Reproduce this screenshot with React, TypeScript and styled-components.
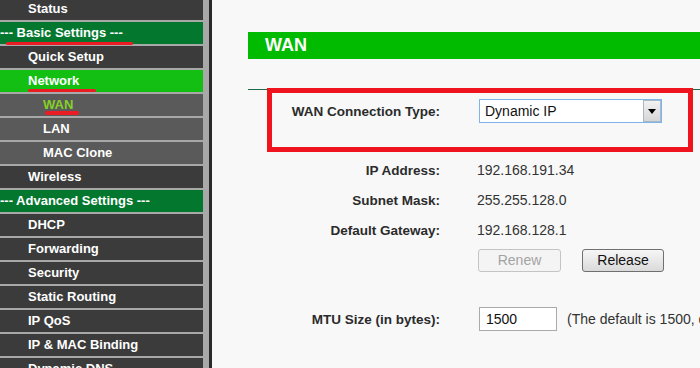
import React from "react";
import styled, { createGlobalStyle } from "styled-components";

const Global = createGlobalStyle`
  html, body { margin: 0; padding: 0; background: #f8f8f8; overflow: hidden; }
  body { font-family: "Liberation Sans", Arial, sans-serif; }
  #root { width: 700px; height: 368px; }
`;

const Page = styled.div`
  display: flex;
  width: 700px;
  height: 368px;
  overflow: hidden;
`;

const Sidebar = styled.nav`
  flex: 0 0 auto;
  width: 203px;
  height: 368px;
  padding-right: 6px;
  background: #a8a8a8;
  border-right: 3px solid #2a2a2a;
  overflow: hidden;
`;

const MenuList = styled.div`
  margin-top: -2px;
  display: flex;
  flex-direction: column;
  gap: 2px;
`;

type Kind = "top" | "sub" | "current" | "category" | "active";

const rowBg: Record<Kind, string> = {
  top: "#3b3b3b",
  sub: "#5a5a5a",
  current: "#5a5a5a",
  category: "#04772f",
  active: "#12bf12",
};

const MenuItem = styled.div<{ $kind: Kind }>`
  flex: 0 0 22px;
  height: 22px;
  line-height: 22px;
  font-size: 13px;
  font-weight: bold;
  white-space: nowrap;
  color: ${(p) => (p.$kind === "current" ? "#84d026" : "#ffffff")};
  background: ${(p) => rowBg[p.$kind]};
  padding-left: ${(p) =>
    p.$kind === "category" ? 0 : p.$kind === "sub" || p.$kind === "current" ? 43 : 28}px;
`;

const Mark = styled.span<{ $l: number; $r: number; $b: number; $h: number }>`
  position: relative;
  display: inline-block;
  &::after {
    content: "";
    position: absolute;
    left: ${(p) => p.$l}px;
    right: ${(p) => p.$r}px;
    bottom: ${(p) => p.$b}px;
    height: ${(p) => p.$h}px;
    background: #ec1c24;
    border-radius: 2px;
  }
`;

const Main = styled.main`
  flex: 1;
  min-width: 0;
  background: #f8f8f8;
  padding: 32px 0 0 36px;
`;

const TitleBar = styled.h1`
  margin: 0;
  height: 27px;
  line-height: 27px;
  background: #00bb00;
  color: #ffffff;
  font-size: 18px;
  font-weight: bold;
  padding-left: 17px;
`;

const Rule = styled.div`
  margin-top: 30px;
  height: 1px;
  background: #1f6b48;
`;

const Highlight = styled.div`
  margin: -2px 7px 0 19px;
  border: 5px solid #f0141e;
  padding: 6px 0 24px;
`;

const Fields = styled.div<{ $top: number }>`
  margin-top: ${(p) => p.$top}px;
`;

const FormRow = styled.div<{ $labelWidth: number; $gap: number; $height: number }>`
  display: grid;
  grid-template-columns: ${(p) => p.$labelWidth}px 1fr;
  column-gap: ${(p) => p.$gap}px;
  align-items: center;
  height: ${(p) => p.$height}px;
`;

const Label = styled.div`
  text-align: right;
  font-size: 13.5px;
  font-weight: bold;
  color: #2b2b2b;
  white-space: nowrap;
`;

const Value = styled.div`
  font-size: 14px;
  color: #333333;
  white-space: nowrap;
  display: flex;
  align-items: center;
`;

const Select = styled.div`
  box-sizing: border-box;
  width: 183px;
  height: 24px;
  margin-left: 2px;
  border: 1px solid #7eb4ea;
  background: #ffffff;
  font-size: 14px;
  color: #111111;
  padding-left: 5px;
  display: flex;
  align-items: center;
  justify-content: space-between;
`;

const SelectButton = styled.span`
  box-sizing: border-box;
  width: 18px;
  height: 22px;
  border: 1px solid #a9b7c6;
  background: linear-gradient(#f2f2f2, #d6d6d6);
  display: flex;
  align-items: center;
  justify-content: center;
`;

const Button = styled.button<{ $disabled?: boolean }>`
  box-sizing: border-box;
  height: 23px;
  width: ${(p) => (p.$disabled ? 83 : 82)}px;
  padding: 0;
  font-family: "Liberation Sans", Arial, sans-serif;
  font-size: 14px;
  border-radius: 3px;
  color: ${(p) => (p.$disabled ? "#a3a3a3" : "#111111")};
  border: 1px solid ${(p) => (p.$disabled ? "#c4c4c4" : "#707070")};
  background: ${(p) =>
    p.$disabled ? "#f4f4f4" : "linear-gradient(#f6f6f6 0%, #e8e8e8 50%, #dadada 100%)"};
`;

const ButtonGroup = styled.div`
  display: flex;
  gap: 21px;
  margin-left: 1px;
`;

const TextInput = styled.div`
  box-sizing: border-box;
  width: 78px;
  height: 24px;
  margin-left: 2px;
  border: 1px solid #aaaaaa;
  background: #ffffff;
  font-size: 14px;
  color: #111111;
  padding-left: 6px;
  line-height: 22px;
`;

const Hint = styled.span`
  margin-left: 10px;
  font-size: 14px;
  color: #333333;
  white-space: nowrap;
`;

const Gap = styled.div<{ $h: number }>`
  height: ${(p) => p.$h}px;
`;

const menu: { label: string; kind: Kind; mark?: [number, number, number, number] }[] = [
  { label: "Status", kind: "top" },
  { label: "--- Basic Settings ---", kind: "category", mark: [6, -10, -1, 3] },
  { label: "Quick Setup", kind: "top" },
  { label: "Network", kind: "active", mark: [0, -17, 0, 3] },
  { label: "WAN", kind: "current", mark: [2, -6, 1, 4] },
  { label: "LAN", kind: "sub" },
  { label: "MAC Clone", kind: "sub" },
  { label: "Wireless", kind: "top" },
  { label: "--- Advanced Settings ---", kind: "category" },
  { label: "DHCP", kind: "top" },
  { label: "Forwarding", kind: "top" },
  { label: "Security", kind: "top" },
  { label: "Static Routing", kind: "top" },
  { label: "IP QoS", kind: "top" },
  { label: "IP & MAC Binding", kind: "top" },
  { label: "Dynamic DNS", kind: "top" },
  { label: "System Tools", kind: "top" },
];

const info = [
  ["IP Address:", "192.168.191.34"],
  ["Subnet Mask:", "255.255.128.0"],
  ["Default Gateway:", "192.168.128.1"],
];

export default function App() {
  return (
    <>
      <Global />
      <Page>
        <Sidebar>
          <MenuList>
            {menu.map((m) => (
              <MenuItem key={m.label} $kind={m.kind}>
                {m.mark ? (
                  <Mark $l={m.mark[0]} $r={m.mark[1]} $b={m.mark[2]} $h={m.mark[3]}>
                    {m.label}
                  </Mark>
                ) : (
                  m.label
                )}
              </MenuItem>
            ))}
          </MenuList>
        </Sidebar>
        <Main>
          <TitleBar>WAN</TitleBar>
          <Rule />
          <Highlight>
            <FormRow $labelWidth={168} $gap={37} $height={24}>
              <Label>WAN Connection Type:</Label>
              <Value>
                <Select>
                  <span>Dynamic IP</span>
                  <SelectButton>
                    <svg width="8" height="5" viewBox="0 0 8 5">
                      <path d="M0 0 H8 L4 5 Z" fill="#000" />
                    </svg>
                  </SelectButton>
                </Select>
              </Value>
            </FormRow>
          </Highlight>
          <Fields $top={3}>
            {info.map(([l, v]) => (
              <FormRow key={l} $labelWidth={192} $gap={37} $height={30}>
                <Label>{l}</Label>
                <Value>{v}</Value>
              </FormRow>
            ))}
            <FormRow $labelWidth={192} $gap={37} $height={30}>
              <span />
              <ButtonGroup>
                <Button $disabled>Renew</Button>
                <Button>Release</Button>
              </ButtonGroup>
            </FormRow>
            <Gap $h={29} />
            <FormRow $labelWidth={192} $gap={37} $height={30}>
              <Label>MTU Size (in bytes):</Label>
              <Value>
                <TextInput>1500</TextInput>
                <Hint>(The default is 1500, do not change unless necessary.)</Hint>
              </Value>
            </FormRow>
          </Fields>
        </Main>
      </Page>
    </>
  );
}
